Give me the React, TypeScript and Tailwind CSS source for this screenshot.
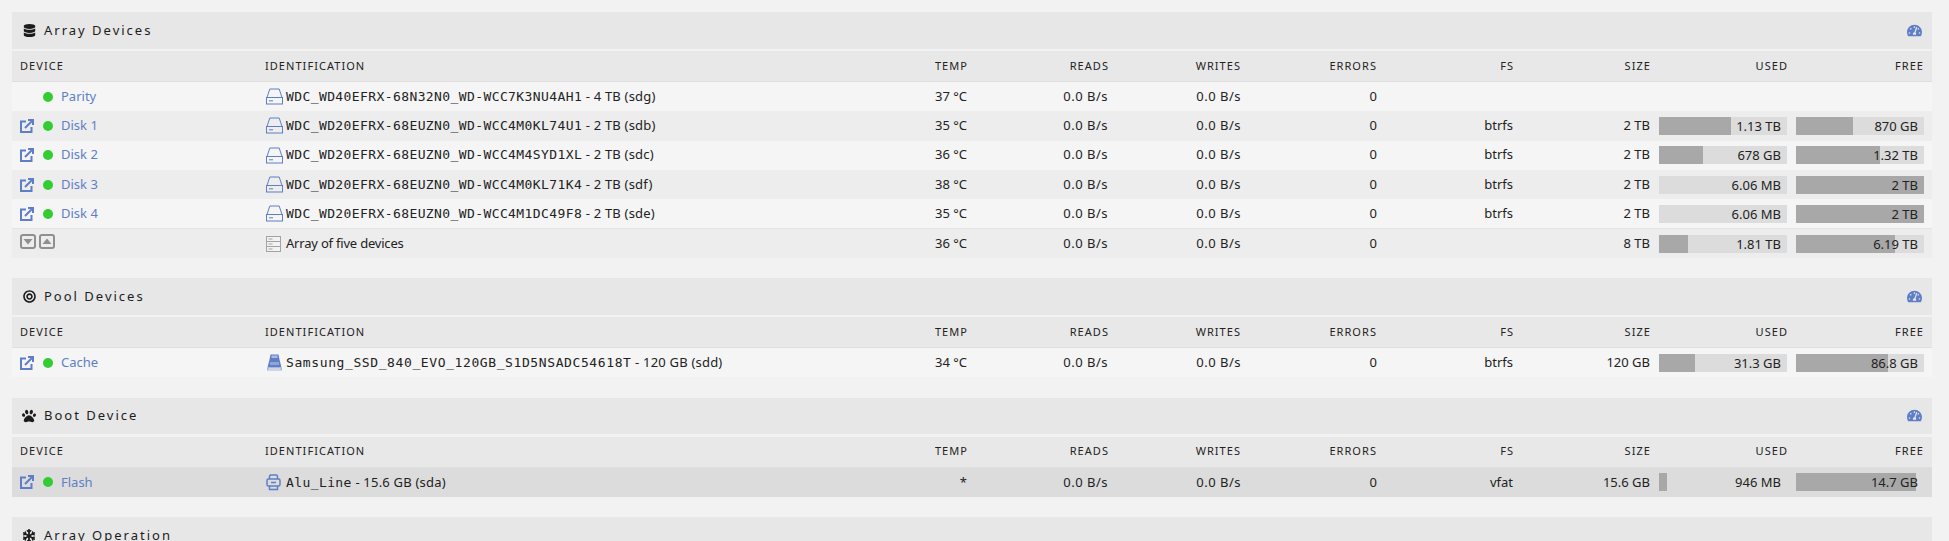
import React from "react";
import { FaDatabase, FaBullseye, FaPaw, FaSnowflake, FaTachometerAlt } from "react-icons/fa";

const gridCols =
  "grid grid-cols-[246px_1fr_100px_141px_133px_136px_136px_137px_137px_137px]";
const sansFont = "font-['Noto_Sans',sans-serif]";
const monoFont = "font-['DejaVu_Sans_Mono',monospace]";

const LinkIcon = () => (
  <svg width="14" height="14" viewBox="0 0 14 14" fill="none" stroke="#5e7fc7" strokeWidth="2">
    <path d="M6 2.500H1v10.500h10.500V8" />
    <path d="M5 9 12.500 1.500M8 1h5v5" />
  </svg>
);

const DiskIcon = () => (
  <svg width="17" height="17" viewBox="0 0 17 17" fill="none" stroke="#5e7fc7" strokeWidth="1">
    <path d="M1 9.500 3.800 1h9.400L16 9.500" />
    <rect x="0.500" y="9.500" width="16" height="6.500" />
    <path d="M3 12.800h4" />
  </svg>
);

const SsdIcon = () => (
  <svg width="17" height="17" viewBox="0 0 17 17">
    <path d="M4.500 0.500h8l1 5 2 8h-14l2-8z" fill="#5e7fc7" />
    <path d="M5.500 1.500h6v2.500h-6z" fill="#a9bbe2" />
    <path d="M4 8h9v3H4z" fill="#8fa5d8" />
    <path d="M1 13.500h15v3H1z" fill="#a9b6d6" />
    <path d="M2.500 14.500h12v1h-12z" fill="#f5f5f5" />
  </svg>
);

const FlashIcon = () => (
  <svg width="15" height="17" viewBox="0 0 15 17" fill="none" stroke="#5e7fc7" strokeWidth="1.500">
    <path d="M3.500 5V2.500Q3.500 1 5 1h5q1.500 0 1.500 1.500V5" />
    <rect x="1" y="5" width="13" height="7" rx="1.500" />
    <path d="M3.500 12v3.500h8V12M5 8.500h5" />
  </svg>
);

const ArrayIcon = () => (
  <svg width="15" height="16" viewBox="0 0 15 16" fill="#f2f2f2" stroke="#a3a3a3" strokeWidth="1">
    <rect x="0.500" y="0.500" width="14" height="15" />
    <path d="M0.500 5.500h14M0.500 10.500h14M2.500 3h4M2.500 8h4M2.500 13h4" />
  </svg>
);

const ToggleIcon = ({ up }: { up?: boolean }) => (
  <svg width="16" height="15" viewBox="0 0 16 15">
    <rect x="1" y="1" width="14" height="13" rx="2" fill="#ededed" stroke="#8f8f8f" strokeWidth="2" />
    <path d={up ? "M3.500 10 8 4.500l4.500 5.500z" : "M3.500 5 8 10.500 12.500 5z"} fill="#8f8f8f" />
  </svg>
);

const Bar = ({ value, pct }: { value?: string; pct?: number }) => (
  <div className="relative h-[18px] bg-[#dcdcdc]">
    <div className="absolute inset-y-0 left-0 bg-[#a8a8a8]" style={{ width: `${pct ?? 0}%` }} />
    <span className="absolute right-[6px] top-0 leading-[18px]">{value}</span>
  </div>
);

type Row = {
  name?: string;
  link?: boolean;
  icon: React.ReactNode;
  id: string;
  rest?: string;
  idClass?: string;
  temp: string;
  fs?: string;
  size?: string;
  used?: [string, number];
  free?: [string, number];
  bg: string;
  footer?: boolean;
};

const wdc = `${monoFont} tracking-[0.4px]`;

const arrayRows: Row[] = [
  { name: "Parity", icon: <DiskIcon />, id: "WDC_WD40EFRX-68N32N0_WD-WCC7K3NU4AH1", rest: " - 4 TB (sdg)", idClass: wdc, temp: "37 °C", bg: "bg-[#f5f5f5]" },
  { name: "Disk 1", link: true, icon: <DiskIcon />, id: "WDC_WD20EFRX-68EUZN0_WD-WCC4M0KL74U1", rest: " - 2 TB (sdb)", idClass: wdc, temp: "35 °C", fs: "btrfs", size: "2 TB", used: ["1.13 TB", 56], free: ["870 GB", 44.5], bg: "bg-[#ededed]" },
  { name: "Disk 2", link: true, icon: <DiskIcon />, id: "WDC_WD20EFRX-68EUZN0_WD-WCC4M4SYD1XL", rest: " - 2 TB (sdc)", idClass: wdc, temp: "36 °C", fs: "btrfs", size: "2 TB", used: ["678 GB", 34], free: ["1.32 TB", 66], bg: "bg-[#f5f5f5]" },
  { name: "Disk 3", link: true, icon: <DiskIcon />, id: "WDC_WD20EFRX-68EUZN0_WD-WCC4M0KL71K4", rest: " - 2 TB (sdf)", idClass: wdc, temp: "38 °C", fs: "btrfs", size: "2 TB", used: ["6.06 MB", 0], free: ["2 TB", 100], bg: "bg-[#ededed]" },
  { name: "Disk 4", link: true, icon: <DiskIcon />, id: "WDC_WD20EFRX-68EUZN0_WD-WCC4M1DC49F8", rest: " - 2 TB (sde)", idClass: wdc, temp: "35 °C", fs: "btrfs", size: "2 TB", used: ["6.06 MB", 0], free: ["2 TB", 100], bg: "bg-[#f5f5f5]" },
  { footer: true, icon: <ArrayIcon />, id: "Array of five devices", idClass: "tracking-[-0.2px]", temp: "36 °C", size: "8 TB", used: ["1.81 TB", 23], free: ["6.19 TB", 77], bg: "bg-[#ededed]" },
];

const poolRows: Row[] = [
  { name: "Cache", link: true, icon: <SsdIcon />, id: "Samsung_SSD_840_EVO_120GB_S1D5NSADC54618T", rest: " - 120 GB (sdd)", idClass: `${monoFont} tracking-[0.6px]`, temp: "34 °C", fs: "btrfs", size: "120 GB", used: ["31.3 GB", 28], free: ["86.8 GB", 72], bg: "bg-[#f5f5f5]" },
];

const bootRows: Row[] = [
  { name: "Flash", link: true, icon: <FlashIcon />, id: "Alu_Line", rest: " - 15.6 GB (sda)", idClass: wdc, temp: "*", fs: "vfat", size: "15.6 GB", used: ["946 MB", 6], free: ["14.7 GB", 94], bg: "bg-[#dcdcdc]" },
];

const TableHead = () => (
  <div className={`${gridCols} mt-[2.5px] h-[31px] items-center border-b border-[#dedede] bg-[#e8e8e8] text-[11px] tracking-[1.05px] text-[#222]`}>
    <div className="pl-2">DEVICE</div>
    <div className="pl-[7px]">IDENTIFICATION</div>
    <div className="pr-[7px] text-right">TEMP</div>
    <div className="pr-[7px] text-right">READS</div>
    <div className="pr-2 text-right">WRITES</div>
    <div className="pr-2 text-right">ERRORS</div>
    <div className="pr-[7px] text-right">FS</div>
    <div className="pr-[7px] text-right">SIZE</div>
    <div className="pr-[7px] text-right">USED</div>
    <div className="pr-2 text-right">FREE</div>
  </div>
);

const DeviceRow = ({ row }: { row: Row }) => (
  <div className={`${gridCols} h-[29.3px] items-center text-[13px] text-[#222] ${row.bg} ${row.footer ? "border-t border-[#e3e3e3]" : ""}`}>
    {row.footer ? (
      <div className="flex gap-[3px] self-start pl-2 pt-[5px]">
        <ToggleIcon />
        <ToggleIcon up />
      </div>
    ) : (
      <div className="flex items-center pl-2">
        <div className="flex w-[23px] shrink-0">{row.link && <LinkIcon />}</div>
        <span className="h-[10px] w-[10px] rounded-full bg-[#33cc33]" />
        <span className="ml-2 text-[#5e7fc7]">{row.name}</span>
      </div>
    )}
    <div className="flex items-center whitespace-pre pl-2">
      <div className="flex w-[20px] shrink-0">{row.icon}</div>
      <span className={row.idClass}>{row.id}</span>
      <span className="tracking-[0.2px]">{row.rest}</span>
    </div>
    <div className="pr-2 text-right">{row.temp}</div>
    <div className="pr-2 text-right tracking-[0.5px]">0.0 B/s</div>
    <div className="pr-2 text-right tracking-[0.5px]">0.0 B/s</div>
    <div className="pr-2 text-right">0</div>
    <div className="pr-2 text-right">{row.fs}</div>
    <div className="pr-2 text-right">{row.size}</div>
    <div className="pr-2 pl-[1px]">{row.used && <Bar value={row.used[0]} pct={row.used[1]} />}</div>
    <div className="pr-2 pl-[1px]">{row.free && <Bar value={row.free[0]} pct={row.free[1]} />}</div>
  </div>
);

const Section = ({
  title,
  icon,
  rows,
  gauge = true,
  className = "",
}: {
  title: string;
  icon: React.ReactNode;
  rows?: Row[];
  gauge?: boolean;
  className?: string;
}) => (
  <section className={className}>
    <div className="flex h-[36.5px] items-center justify-between bg-[#e7e7e7] pl-[10px] pr-[10px]">
      <div className="flex items-center text-[#1c1c1c]">
        <span className="flex w-[22px] justify-center pr-2">{icon}</span>
        <span className="text-[13px] tracking-[2px]">{title}</span>
      </div>
      {gauge && <FaTachometerAlt size={15} color="#5e7fc7" />}
    </div>
    {rows && <TableHead />}
    {rows?.map((row) => <DeviceRow key={row.id} row={row} />)}
  </section>
);

export default function App() {
  return (
    <div className={`${sansFont} h-[541px] overflow-hidden bg-[#f2f2f2] pl-3 pr-[17px] pt-3`}>
      <Section title="Array Devices" icon={<FaDatabase size={13} />} rows={arrayRows} />
      <Section title="Pool Devices" icon={<FaBullseye size={13} />} rows={poolRows} className="mt-[20.3px]" />
      <Section title="Boot Device" icon={<FaPaw size={14} />} rows={bootRows} className="mt-[20.3px]" />
      <Section title="Array Operation" icon={<FaSnowflake size={14} />} gauge={false} className="mt-[20.3px]" />
    </div>
  );
}
